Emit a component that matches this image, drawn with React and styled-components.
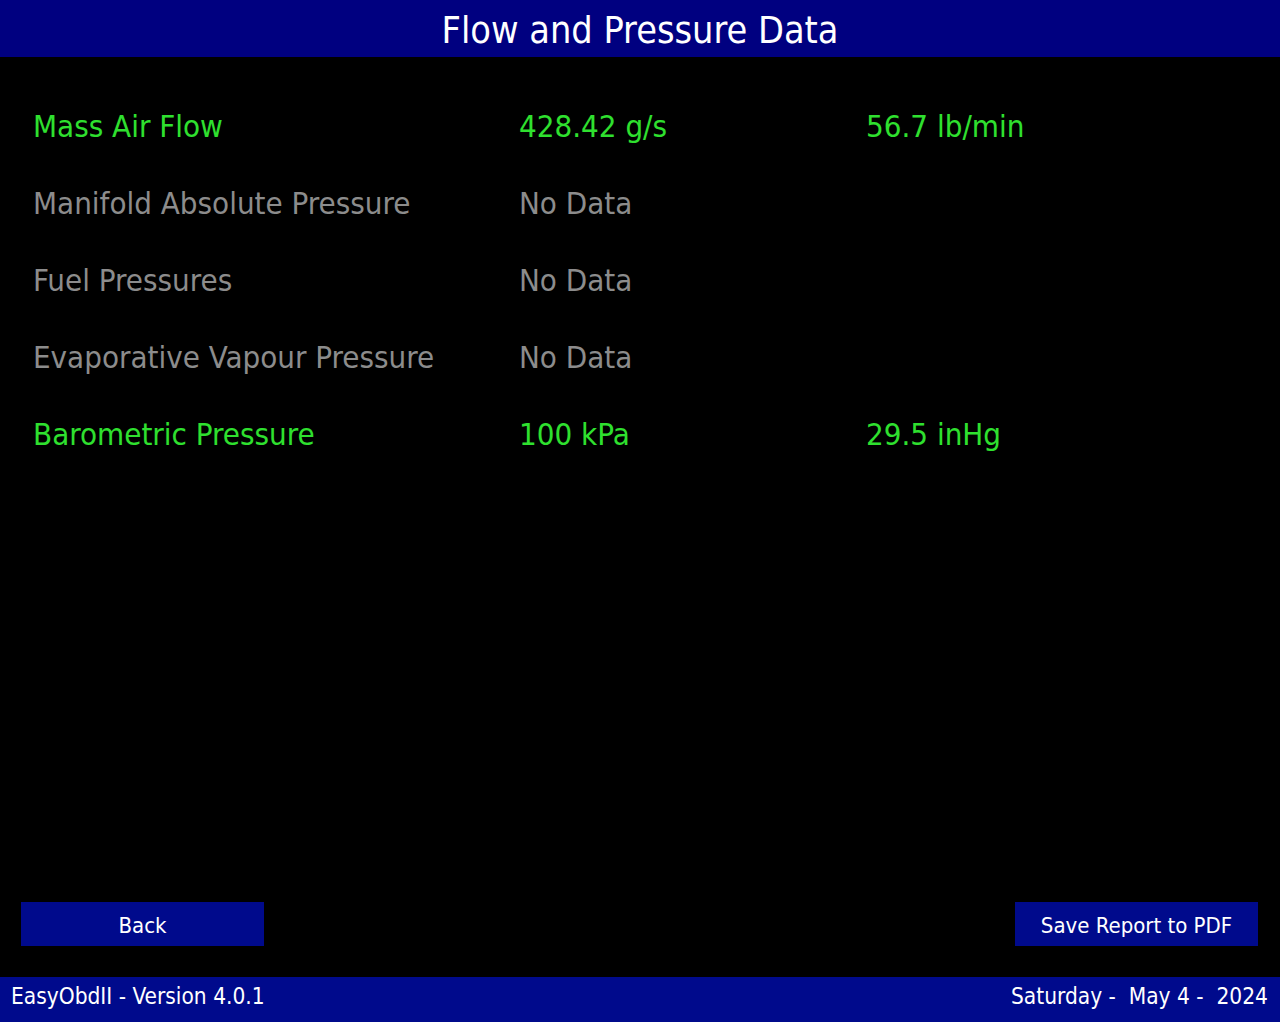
import React from "react";
import styled, { createGlobalStyle } from "styled-components";

const GlobalStyle = createGlobalStyle`
  html, body {
    margin: 0;
    padding: 0;
    background: #000;
  }
  body {
    font-family: "DejaVu Sans Condensed", "DejaVu Sans", Verdana, sans-serif;
    font-stretch: condensed;
  }
`;

const Screen = styled.div`
  width: 1280px;
  height: 1022px;
  display: flex;
  flex-direction: column;
  background: #000;
  overflow: hidden;
`;

const TitleBar = styled.header`
  height: 57px;
  background: #000080;
  color: #fff;
  display: flex;
  align-items: center;
  justify-content: center;
  font-size: 37.5px;
  padding-top: 2px;
  box-sizing: border-box;
`;

const DataTable = styled.div`
  flex: 1;
  padding: 30px 0 0 33px;
  display: grid;
  grid-template-columns: 486px 347px 1fr;
  grid-auto-rows: 77px;
  align-content: start;
  font-size: 31px;
`;

const Cell = styled.div`
  display: flex;
  align-items: center;
  white-space: nowrap;
  color: ${(props) => (props.$active ? "#2fe02f" : "#8c8c8c")};
`;

const ButtonBar = styled.div`
  display: flex;
  justify-content: space-between;
  padding: 0 22px 0 21px;
  margin-bottom: 31px;
`;

const Button = styled.button`
  width: 243px;
  height: 44px;
  border: none;
  background: #000a8c;
  color: #fff;
  font-family: inherit;
  font-stretch: condensed;
  font-size: 22px;
  padding: 2px 0 0;
  cursor: pointer;
`;

const StatusBar = styled.footer`
  height: 45px;
  background: #000a8c;
  color: #fff;
  display: flex;
  align-items: center;
  justify-content: space-between;
  padding: 0 12px 8px 11px;
  box-sizing: border-box;
  font-size: 22.5px;
  white-space: pre;
`;

const rows = [
  { label: "Mass Air Flow", value: "428.42 g/s", alt: "56.7 lb/min", active: true },
  { label: "Manifold Absolute Pressure", value: "No Data", alt: "" },
  { label: "Fuel Pressures", value: "No Data", alt: "" },
  { label: "Evaporative Vapour Pressure", value: "No Data", alt: "" },
  { label: "Barometric Pressure", value: "100 kPa", alt: "29.5 inHg", active: true },
];

const App = () => {
  return (
    <>
      <GlobalStyle />
      <Screen>
        <TitleBar>Flow and Pressure Data</TitleBar>
        <DataTable>
          {rows.map((row) => (
            <React.Fragment key={row.label}>
              <Cell $active={row.active}>{row.label}</Cell>
              <Cell $active={row.active}>{row.value}</Cell>
              <Cell $active={row.active}>{row.alt}</Cell>
            </React.Fragment>
          ))}
        </DataTable>
        <ButtonBar>
          <Button type="button">Back</Button>
          <Button type="button">Save Report to PDF</Button>
        </ButtonBar>
        <StatusBar>
          <span>EasyObdII - Version 4.0.1</span>
          <span>Saturday -  May 4 -  2024</span>
        </StatusBar>
      </Screen>
    </>
  );
};

export default App;
